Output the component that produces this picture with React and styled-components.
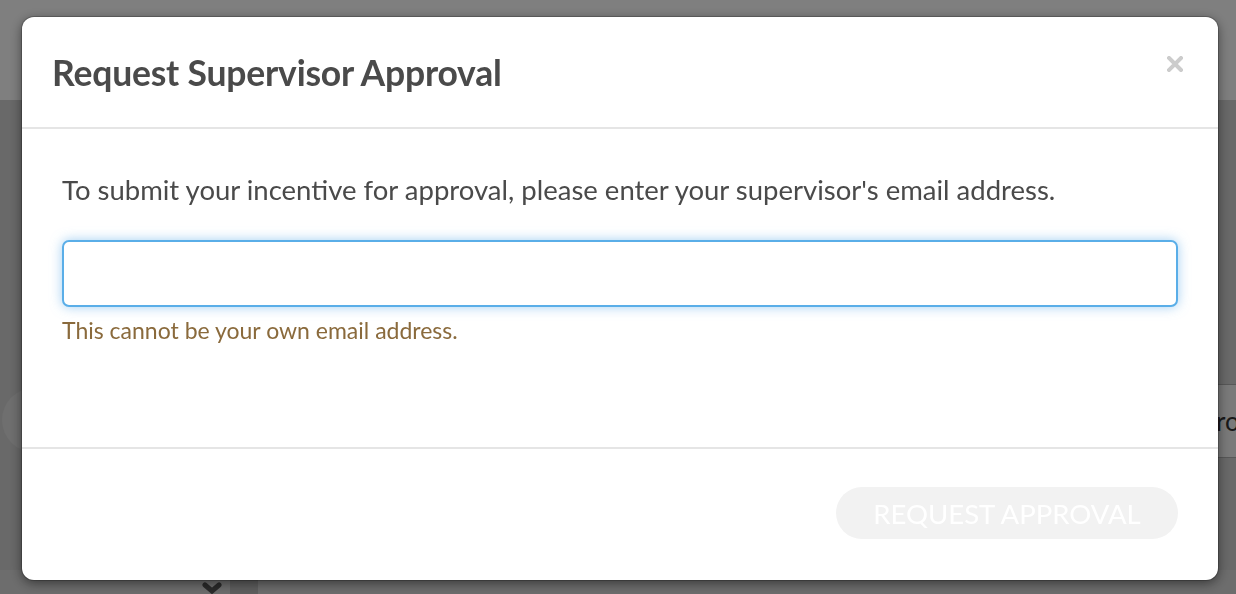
import React from 'react';
import styled, {createGlobalStyle} from 'styled-components';

const GlobalStyle = createGlobalStyle`
  html, body {
    margin: 0;
    padding: 0;
    height: 100%;
  }
  body {
    font-family: Lato, "Noto Sans", sans-serif;
    background: #ffffff;
    overflow: hidden;
  }
`;

// page under the backdrop
const Page = styled.div`
  width: 1236px;
  height: 594px;
  display: flex;
  flex-direction: column;
  background: #d2d2d2;
`;

const TopBar = styled.div`
  height: 100px;
  flex-shrink: 0;
  background: #ffffff;
`;

const PageBody = styled.div`
  flex: 1;
  display: flex;
  justify-content: space-between;
  align-items: flex-start;
  padding-top: 288px;
`;

const Avatar = styled.div`
  width: 64px;
  height: 64px;
  margin-left: 2px;
  border-radius: 50%;
  background: #dedede;
`;

const SideTab = styled.div`
  width: 20px;
  height: 72px;
  margin-top: -4px;
  background: #f4f4f4;
  border-top: 1px solid #b0b0b0;
  border-bottom: 1px solid #b0b0b0;
  display: flex;
  align-items: center;
  font-size: 26px;
  color: #333;
  overflow: hidden;
  white-space: nowrap;
`;

const BottomRow = styled.div`
  height: 24px;
  flex-shrink: 0;
  display: flex;
  align-items: flex-end;
  background: #dadada;
  padding-left: 202px;
  gap: 8px;
`;

const DarkCell = styled.div`
  width: 28px;
  height: 24px;
  background: #bdbdbd;
`;

const Backdrop = styled.div`
  position: fixed;
  inset: 0;
  background: rgba(0, 0, 0, 0.5);
  display: flex;
  align-items: flex-start;
  justify-content: center;
  padding-top: 17px;
`;

const Modal = styled.div`
  width: 1196px;
  height: 563px;
  margin-left: 4px;
  background: #ffffff;
  border-radius: 12px;
  box-shadow: 0 3px 12px rgba(0, 0, 0, 0.5), 0 0 0 1px rgba(0, 0, 0, 0.2);
  display: flex;
  flex-direction: column;
  overflow: hidden;
`;

const Header = styled.div`
  height: 112px;
  flex-shrink: 0;
  box-sizing: border-box;
  padding: 0 34px 0 30px;
  display: flex;
  align-items: center;
  justify-content: space-between;
  border-bottom: 2px solid #e5e5e5;
`;

const Title = styled.h4`
  margin: 0;
  font-size: 35.5px;
  font-weight: 700;
  color: #4a4a4a;
  letter-spacing: -0.2px;
`;

const Close = styled.button`
  border: 0;
  background: none;
  padding: 0;
  width: 18px;
  height: 18px;
  margin-top: -16px;
  display: flex;
  align-items: center;
  justify-content: center;
  cursor: pointer;
`;

const Body = styled.div`
  height: 320px;
  flex-shrink: 0;
  box-sizing: border-box;
  padding: 45px 40px 0;
  border-bottom: 2px solid #e5e5e5;
`;

const Lead = styled.p`
  margin: 0 0 34px;
  font-size: 27.5px;
  line-height: 32px;
  color: #4a4a4a;
`;

const EmailInput = styled.input`
  display: block;
  width: 100%;
  height: 67px;
  box-sizing: border-box;
  border: 2px solid #5aaee8;
  border-radius: 7px;
  box-shadow: 0 0 12px rgba(102, 175, 233, 0.6);
  outline: none;
  font: inherit;
  font-size: 22px;
  padding: 0 16px;
`;

const Hint = styled.p`
  margin: 8px 0 0;
  font-size: 23px;
  line-height: 30px;
  color: #8a6a3c;
`;

const Footer = styled.div`
  flex: 1;
  display: flex;
  align-items: flex-start;
  justify-content: flex-end;
  padding: 38px 40px 0;
`;

const SubmitButton = styled.button`
  width: 342px;
  height: 52px;
  border: 0;
  border-radius: 26px;
  background: #f2f2f2;
  color: #ffffff;
  font-family: Lato, "Noto Sans", sans-serif;
  font-size: 27.5px;
  font-weight: 400;
  text-transform: uppercase;
  padding: 0;
  cursor: default;
`;

const CloseIcon = () => (
  <svg width="16" height="16" viewBox="0 0 16 16">
    <path d="M2 2 L14 14 M14 2 L2 14" stroke="#cccccc" strokeWidth="4" strokeLinecap="square" />
  </svg>
);

const Chevron = () => (
  <svg width="20" height="12" viewBox="0 0 20 12">
    <path d="M3 3 L10 9 L17 3" fill="none" stroke="#555555" strokeWidth="5" strokeLinecap="round" />
  </svg>
);

const App = () => {
  return (
    <>
      <GlobalStyle/>
      <Page>
        <TopBar/>
        <PageBody>
          <Avatar/>
          <SideTab>ro</SideTab>
        </PageBody>
        <BottomRow>
          <Chevron/>
          <DarkCell/>
        </BottomRow>
      </Page>
      <Backdrop>
        <Modal>
          <Header>
            <Title>Request Supervisor Approval</Title>
            <Close aria-label="Close"><CloseIcon/></Close>
          </Header>
          <Body>
            <Lead>To submit your incentive for approval, please enter your supervisor's email address.</Lead>
            <EmailInput type="email"/>
            <Hint>This cannot be your own email address.</Hint>
          </Body>
          <Footer>
            <SubmitButton disabled>Request Approval</SubmitButton>
          </Footer>
        </Modal>
      </Backdrop>
    </>
  );
};

export default App;
